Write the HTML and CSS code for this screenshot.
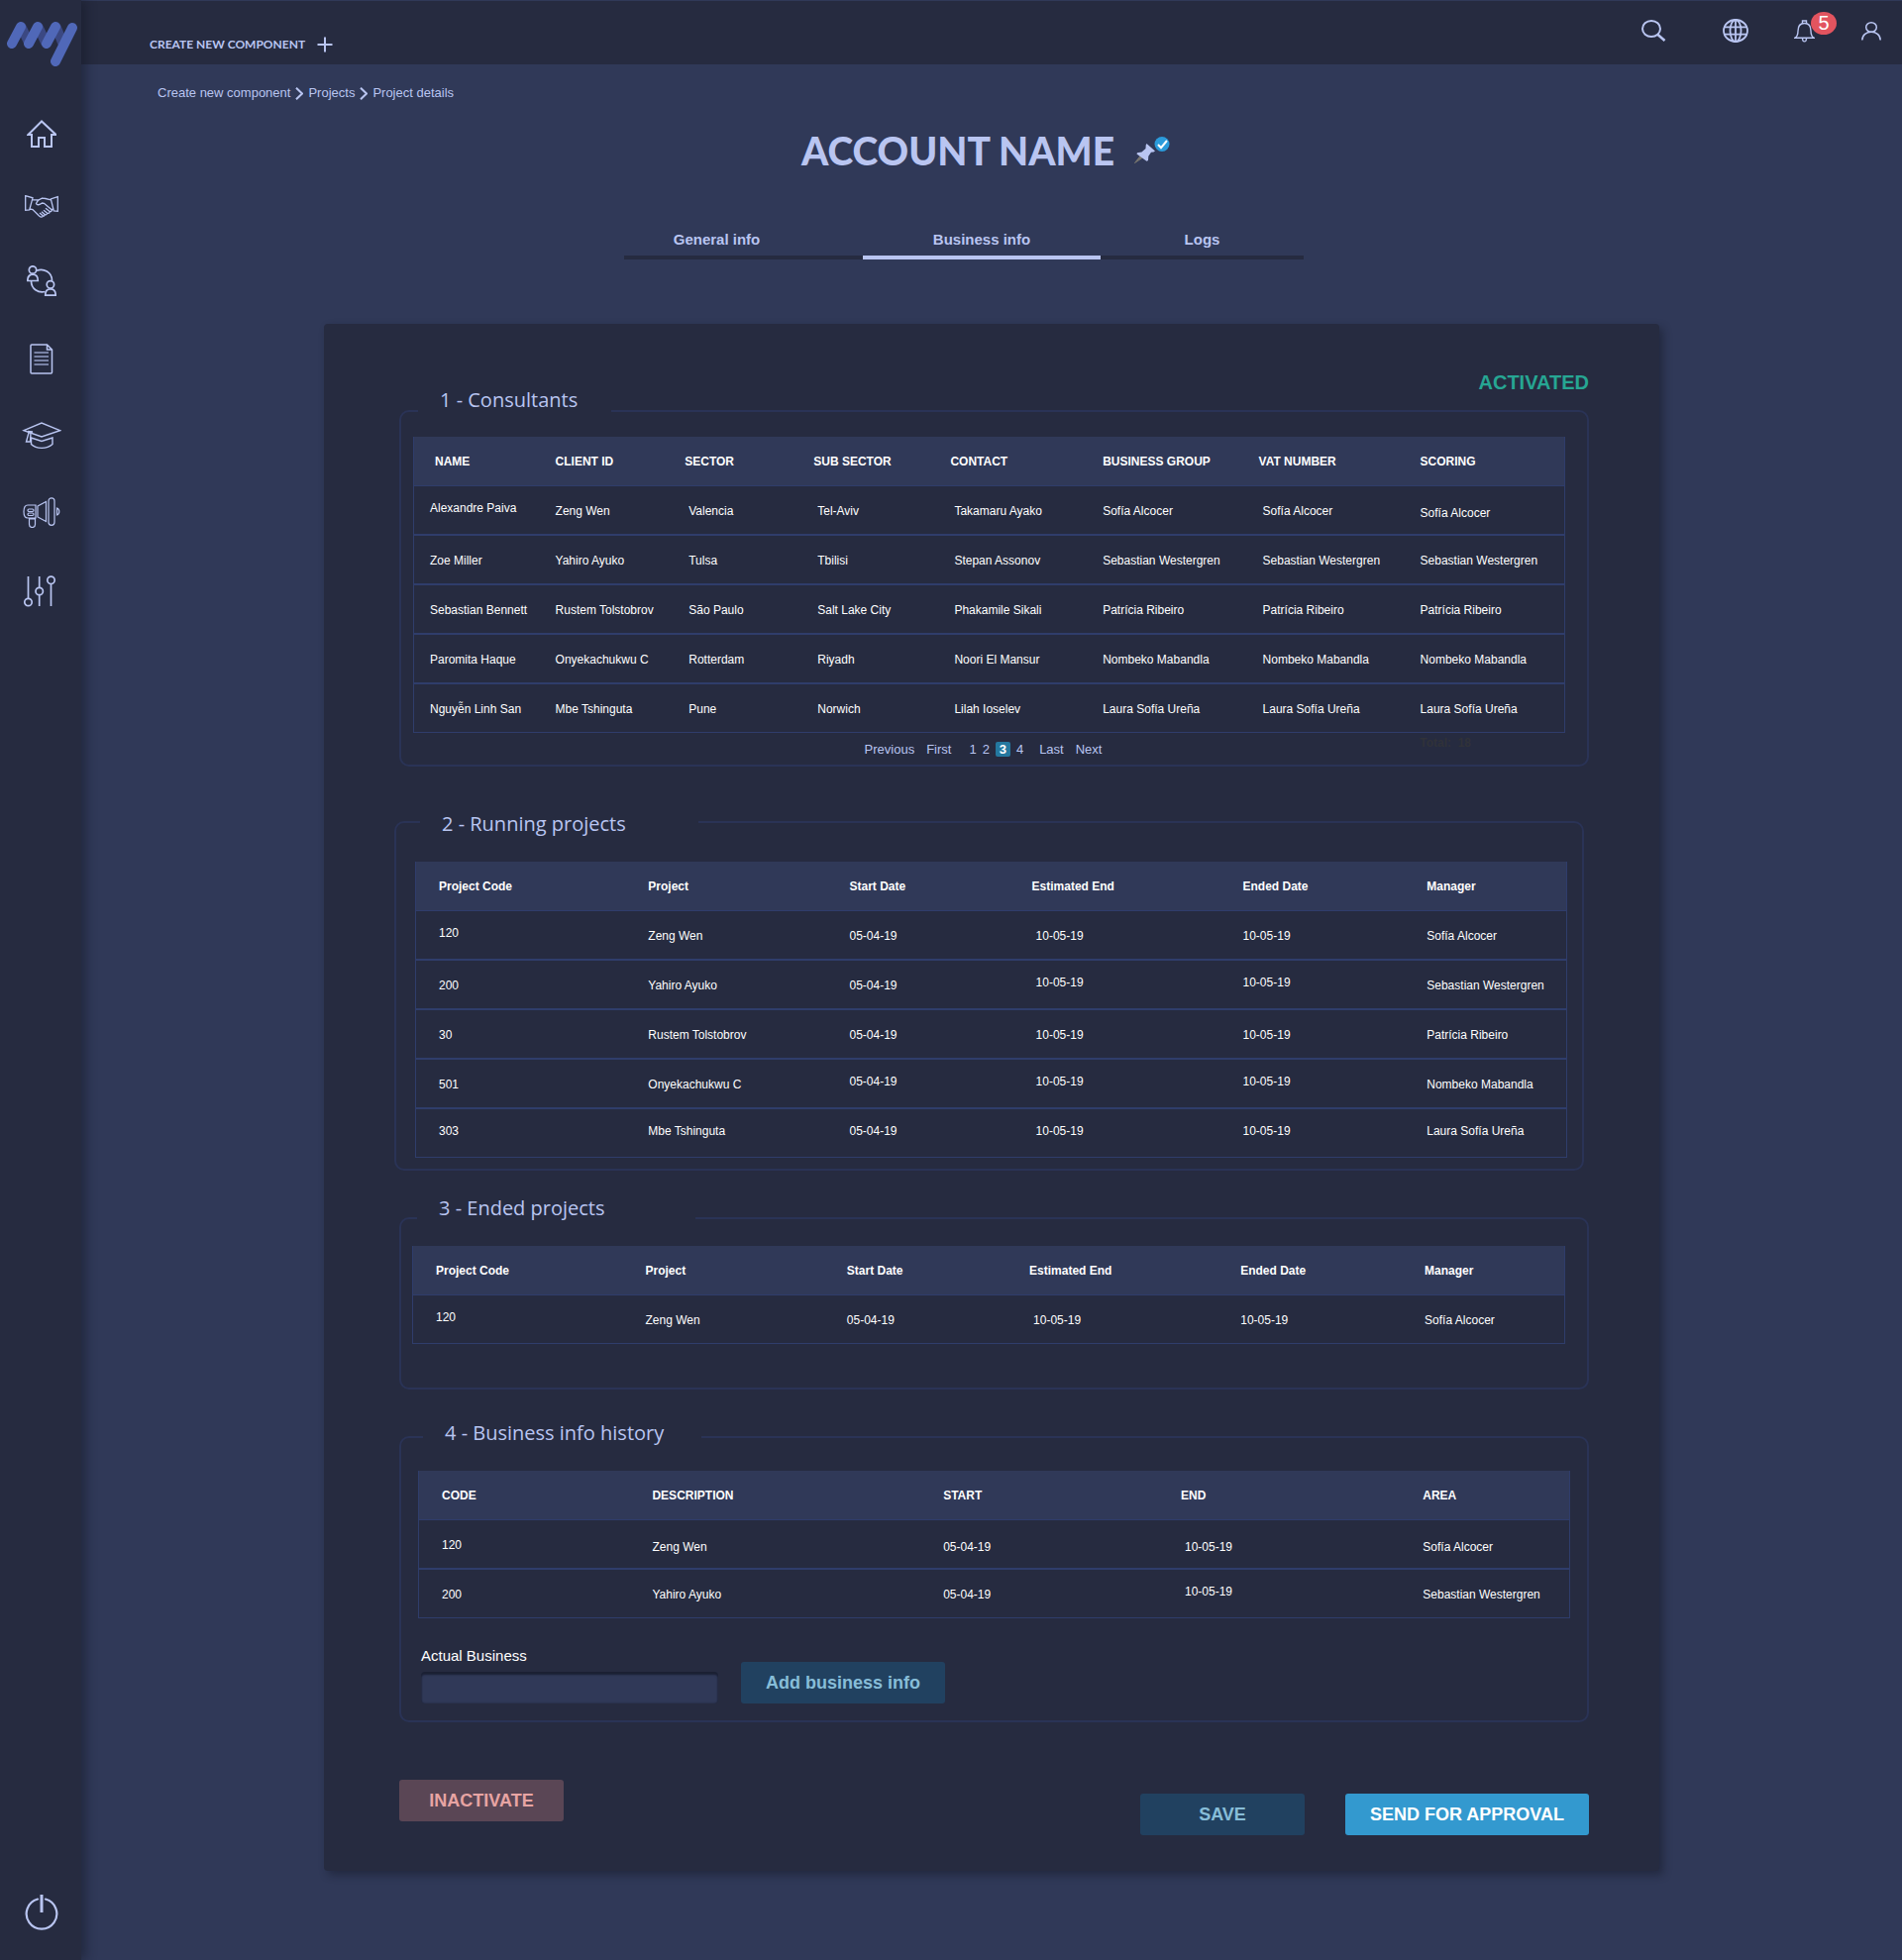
FILE: index.html
```html
<!DOCTYPE html>
<html lang="en">
<head>
<meta charset="utf-8">
<meta name="viewport" content="width=device-width, initial-scale=1">
<title>Account name - Business info</title>
<link rel="stylesheet" href="styles.css">
</head>
<body>
<div class="app">
  <aside class="sidebar">
    <a class="logo" href="#" aria-label="Home page">
      <svg width="72" height="46" viewBox="0 0 72 46" fill="none" stroke-linecap="round" stroke-width="10">
        <path stroke="#3b4882" d="M15 6l7 15M32 6l7 15M50 6l6 15"/>
        <path stroke="#5068b8" d="M14 5L5 22M31 5L22 22M49 5L40 22M66 6L49 40"/>
      </svg>
    </a>
    <nav class="side-nav" aria-label="Main">
      <a href="#" aria-label="Home"><svg width="30" height="28" viewBox="0 0 30 28"><path stroke-width="2" d="M15 1.500L1.500 15H5v12h7V18h6v9h7V15h4.500z"/></svg></a>
      <a href="#" aria-label="Partners"><svg width="34" height="23" viewBox="0 0 34 23"><path stroke-width="1.300" d="M.7.700L8 2.800 4.700 15l-4 .3zM33.300 1.700L26.300 4l3 12 4 .3zM8 4.700l5.500.3 4-1.800 3.500.3 5.300 1.300M18 3.200c-3 .8-5.500 2.800-6.500 5.300.8 2 3.500 1.500 6-.5l2 .3 7.300 6.200c1 1.500-.6 2.500-1.700 1.900L21 13.300M5 14l3 .6 6.500 6.400c1.800 1.500 3.500 1.300 4 0L15 18M26.700 16.500l2-3.500M25 16.600c.2 1.700-1.200 2.200-2.500 1.400L19 15.300M22.500 18.200c0 1.700-1.300 2-2.500 1.200L17 16.800M20 19.700c0 1.200-.7 1.600-1.700 1.500"/></svg></a>
      <a href="#" aria-label="People"><svg width="30" height="31" viewBox="0 0 30 31"><g stroke-width="1.700"><circle cx="6" cy="4.500" r="3.700"/><path d="M.8 15.500c0-4 2-6.300 5.200-6.300s5.300 2.300 5.300 6.300zM18.700 30.200c0-4 2-6.300 5.200-6.300s5.300 2.300 5.300 6.300z"/><circle cx="23.900" cy="19.300" r="3.700"/><path d="M10 5.300c7-3 15.500 1.700 15.500 10M4.500 16c0 7.500 7 12.300 14 10.500"/></g></svg></a>
      <a href="#" aria-label="Documents"><svg width="24" height="31" viewBox="0 0 24 31"><path stroke-width="1.500" d="M1 2Q1 1 2 1h15.500l5 5v23q0 1-1 1H2q-1 0-1-1zM17.500 1v5h5"/><path stroke-width="1.500" opacity=".75" d="M4.500 9H19M4.500 13H19M4.500 17H19M4.500 21H19"/></svg></a>
      <a href="#" aria-label="Training"><svg width="40" height="28" viewBox="0 0 40 28"><g stroke-width="1.400"><path d="M2 8.700L20 1l18.500 7.700L20 15zM9.500 16v6.500c5 5.200 16 5.200 21.500 0V16L20 19.500z"/><path d="M6 9.500l5 .5-4 .8L4.500 20h4L9 11"/></g></svg></a>
      <a href="#" aria-label="Campaigns"><svg width="38" height="31" viewBox="0 0 38 31"><g stroke-width="1.200"><path d="M13 8H5C2.500 8 1 10 1 14.500S2.500 21 5 21h8zM15 9l8.500-4.500v20L15 20zM6.500 22v5.500a2.700 2.700 0 0 0 6 0V22z"/><rect x="26" y=".8" width="6" height="27.500" rx="3"/><rect x="5" y="12" width="6" height="2.500" rx="1.200"/><rect x="5" y="16" width="6" height="2.500" rx="1.200"/><path d="M34.500 11v7c3-1 3-6 0-7z"/></g></svg></a>
      <a href="#" aria-label="Settings"><svg width="36" height="32" viewBox="0 0 36 32"><g stroke-width="1.700"><path d="M4.500 1v22M15.700 1v11.500M15.700 20v11M27.500 9v22"/><circle cx="4.500" cy="27" r="3.700"/><circle cx="15.700" cy="16" r="3.700"/><circle cx="27.500" cy="4.800" r="3.700"/></g></svg></a>
    </nav>
    <button class="power" type="button" aria-label="Log out"><svg width="34" height="36" viewBox="0 0 34 36"><path stroke-width="2.200" stroke-linecap="round" d="M13 4.500a15.300 15.300 0 1 0 8 0"/><path stroke-width="3" d="M17 0v18"/></svg></button>
  </aside>

  <div class="page">
    <header class="topbar">
      <button class="create" type="button">CREATE NEW COMPONENT
        <svg width="16" height="16" viewBox="0 0 16 16"><path stroke-width="2" d="M8 .500v15M.500 8h15"/></svg>
      </button>
      <div class="tools">
        <button type="button" aria-label="Search"><svg width="25" height="22" viewBox="0 0 25 22"><ellipse cx="10" cy="9" rx="9" ry="8" stroke-width="2"/><path stroke-width="2.500" d="M16 14.500l7.500 6.500"/></svg></button>
        <button type="button" aria-label="Language"><svg width="26" height="24" viewBox="0 0 26 24"><g stroke-width="1.800"><ellipse cx="13" cy="12" rx="12" ry="11"/><ellipse cx="13" cy="12" rx="5.500" ry="11"/><path d="M13 1v22M2 8.300h22M2 15.700h22"/></g></svg></button>
        <button class="bell" type="button" aria-label="Notifications"><svg width="21" height="23" viewBox="0 0 21 23"><path stroke-width="1.400" d="M1 18.200c2.500-1.500 3-3 3-7C4 6.500 6.500 3.500 10.500 3.500s6.500 3 6.500 7.700c0 4 .5 5.500 3 7zM8.500 3.500V1h4v2.500M8.500 18.500c0 4.500 4 4.500 4 0"/></svg><span class="badge">5</span></button>
        <button type="button" aria-label="Profile"><svg width="20" height="19" viewBox="0 0 20 19"><g stroke-width="1.500"><ellipse cx="10" cy="5.500" rx="5.300" ry="4.700"/><path d="M.8 18.500c0-11 18.400-11 18.400 0"/></g></svg></button>
      </div>
    </header>

    <nav class="breadcrumb" aria-label="Breadcrumb">
      <a href="#">Create new component</a>
      <svg width="8" height="13" viewBox="0 0 8 13"><path stroke-width="2" d="M1 .700l6 5.800-6 5.800"/></svg>
      <a href="#">Projects</a>
      <svg width="8" height="13" viewBox="0 0 8 13"><path stroke-width="2" d="M1 .700l6 5.800-6 5.800"/></svg>
      <a href="#">Project details</a>
    </nav>

    <main>
      <div class="title">
        <h1>ACCOUNT NAME</h1>
        <svg width="36" height="28" viewBox="0 0 36 28"><path d="M.5 26.500L6 19.500l2 2z" fill="#77756f" stroke="#77756f"/><path fill="#b9c5f1" stroke="none" d="M12.500 7l8.500 7.500-1.500 1-2.500.3-2.700 4-.3 4.200-1.500.8L2.500 17.500l.5-1.300 4.500-.7 4-3.500.2-3.500z"/><circle cx="28" cy="7.500" r="7.500" fill="#2b9bdb" stroke="none"/><path stroke="#fff" stroke-width="2" d="M24 8l3 3.200 6-7.200"/></svg>
      </div>

      <nav class="tabs" aria-label="Account sections">
        <a class="tab tab-first" href="#">General info</a>
        <a class="tab tab-active" href="#" aria-current="page">Business info</a>
        <a class="tab" href="#">Logs</a>
      </nav>

      <div class="panel">
        <p class="status">ACTIVATED</p>

        <section class="group group-consultants">
          <h2>1 - Consultants</h2>
          <table class="tight">
            <colgroup><col class="c-109"><col class="c-116"><col class="c-112"><col class="c-119"><col class="c-129"><col class="c-139"><col class="c-137"><col></colgroup>
            <thead><tr><th class="indent">NAME</th><th>CLIENT ID</th><th class="hang">SECTOR</th><th class="hang">SUB SECTOR</th><th class="hang">CONTACT</th><th>BUSINESS GROUP</th><th class="hang">VAT NUMBER</th><th>SCORING</th></tr></thead>
            <tbody>
              <tr><td class="raised">Alexandre Paiva</td><td>Zeng Wen</td><td>Valencia</td><td>Tel-Aviv</td><td>Takamaru Ayako</td><td>Sofía Alcocer</td><td>Sofía Alcocer</td><td class="lowered">Sofía Alcocer</td></tr>
              <tr><td>Zoe Miller</td><td>Yahiro Ayuko</td><td>Tulsa</td><td>Tbilisi</td><td>Stepan Assonov</td><td>Sebastian Westergren</td><td>Sebastian Westergren</td><td>Sebastian Westergren</td></tr>
              <tr><td>Sebastian Bennett</td><td>Rustem Tolstobrov</td><td>São Paulo</td><td>Salt Lake City</td><td>Phakamile Sikali</td><td>Patrícia Ribeiro</td><td>Patrícia Ribeiro</td><td>Patrícia Ribeiro</td></tr>
              <tr><td>Paromita Haque</td><td>Onyekachukwu C</td><td>Rotterdam</td><td>Riyadh</td><td>Noori El Mansur</td><td>Nombeko Mabandla</td><td>Nombeko Mabandla</td><td>Nombeko Mabandla</td></tr>
              <tr><td>Nguyễn Linh San</td><td>Mbe Tshinguta</td><td>Pune</td><td>Norwich</td><td>Lilah Ioselev</td><td>Laura Sofía Ureña</td><td>Laura Sofía Ureña</td><td>Laura Sofía Ureña</td></tr>
            </tbody>
          </table>
          <div class="table-foot">
            <nav class="pager" aria-label="Pages">
              <a href="#">Previous</a><a href="#">First</a>
              <span class="pages"><a href="#">1</a><a href="#">2</a><a class="current" href="#" aria-current="page">3</a><a href="#">4</a></span>
              <a href="#">Last</a><a href="#">Next</a>
            </nav>
            <span class="total">Total: &nbsp;18</span>
          </div>
        </section>

        <section class="group group-running">
          <h2>2 - Running projects</h2>
          <table>
            <colgroup><col class="c-182"><col class="c-175"><col class="c-162"><col class="c-180"><col class="c-160"><col></colgroup>
            <thead><tr><th>Project Code</th><th>Project</th><th>Start Date</th><th class="hang">Estimated End</th><th>Ended Date</th><th>Manager</th></tr></thead>
            <tbody>
              <tr><td class="raised">120</td><td>Zeng Wen</td><td>05-04-19</td><td>10-05-19</td><td>10-05-19</td><td>Sofía Alcocer</td></tr>
              <tr><td>200</td><td>Yahiro Ayuko</td><td>05-04-19</td><td class="raised">10-05-19</td><td class="raised">10-05-19</td><td>Sebastian Westergren</td></tr>
              <tr><td>30</td><td>Rustem Tolstobrov</td><td>05-04-19</td><td>10-05-19</td><td>10-05-19</td><td>Patrícia Ribeiro</td></tr>
              <tr><td>501</td><td>Onyekachukwu C</td><td class="raised">05-04-19</td><td class="raised">10-05-19</td><td class="raised">10-05-19</td><td>Nombeko Mabandla</td></tr>
              <tr><td class="raised">303</td><td class="raised">Mbe Tshinguta</td><td class="raised">05-04-19</td><td class="raised">10-05-19</td><td class="raised">10-05-19</td><td class="raised">Laura Sofía Ureña</td></tr>
            </tbody>
          </table>
        </section>

        <section class="group group-ended">
          <h2>3 - Ended projects</h2>
          <table>
            <colgroup><col class="c-182"><col class="c-175"><col class="c-162"><col class="c-180"><col class="c-160"><col></colgroup>
            <thead><tr><th>Project Code</th><th>Project</th><th>Start Date</th><th class="hang">Estimated End</th><th>Ended Date</th><th>Manager</th></tr></thead>
            <tbody>
              <tr><td class="raised">120</td><td>Zeng Wen</td><td>05-04-19</td><td>10-05-19</td><td>10-05-19</td><td>Sofía Alcocer</td></tr>
            </tbody>
          </table>
        </section>

        <section class="group group-history">
          <h2>4 - Business info history</h2>
          <table>
            <colgroup><col class="c-183"><col class="c-253"><col class="c-210"><col class="c-207"><col></colgroup>
            <thead><tr><th>CODE</th><th>DESCRIPTION</th><th>START</th><th class="hang">END</th><th>AREA</th></tr></thead>
            <tbody>
              <tr><td>120</td><td class="lowered">Zeng Wen</td><td class="lowered">05-04-19</td><td class="lowered">10-05-19</td><td class="lowered">Sofía Alcocer</td></tr>
              <tr><td>200</td><td>Yahiro Ayuko</td><td>05-04-19</td><td class="raised">10-05-19</td><td>Sebastian Westergren</td></tr>
            </tbody>
          </table>
          <form class="add-form">
            <div class="field">
              <label for="business">Actual Business</label>
              <input id="business" type="text">
            </div>
            <button class="btn btn-muted" type="button">Add business info</button>
          </form>
        </section>

        <div class="actions">
          <button class="btn btn-danger" type="button">INACTIVATE</button>
          <div class="actions-end">
            <button class="btn btn-muted" type="button">SAVE</button>
            <button class="btn btn-primary" type="button">SEND FOR APPROVAL</button>
          </div>
        </div>
      </div>
    </main>
  </div>
</div>
</body>
</html>
```
FILE: styles.css
```css
:root {
  --page: #303958;
  --dark: #262b40;
  --line: #2f3d6b;
  --group-line: #2a3356;
  --text: #b9c5f1;
}

* { box-sizing: border-box; }

body {
  margin: 0;
  background: var(--page);
  color: var(--text);
  font-family: "Liberation Sans", Arial, sans-serif;
  font-size: 13px;
}

h1, h2, p { margin: 0; }
a { color: inherit; text-decoration: none; }

button {
  padding: 0;
  border: 0;
  background: none;
  color: inherit;
  font: inherit;
  cursor: pointer;
}

svg {
  display: block;
  flex: none;
  fill: none;
  stroke: var(--text);
}

.app {
  display: grid;
  grid-template-columns: 82px minmax(0, 1fr);
  min-height: 100vh;
}

/* Sidebar */
.sidebar {
  position: relative;
  z-index: 1;
  display: flex;
  flex-direction: column;
  align-items: center;
  padding: 22px 0 30px 2px;
  background: var(--dark);
  box-shadow: 5px 0 10px rgba(18, 22, 36, .45);
}

.logo { padding-left: 2px; }
.logo svg { stroke: none; }

.side-nav {
  display: flex;
  flex-direction: column;
  align-items: center;
  gap: 48px;
  margin-top: 53px;
}

.power { margin-top: auto; }

/* Top bar */
.topbar {
  display: flex;
  justify-content: space-between;
  height: 64px;
  margin-top: 1px;
  padding: 0 21px 0 69px;
  background: var(--dark);
}

.create {
  display: flex;
  align-items: center;
  gap: 12px;
  padding-top: 23px;
  font: 700 12px/20px Lato, sans-serif;
}

.tools {
  display: grid;
  grid-template-columns: 82px 72px 68px 20px;
  align-items: center;
  height: 60px;
}

.bell { position: relative; width: 21px; }

.badge {
  position: absolute;
  top: -8px;
  left: 17px;
  width: 26px;
  height: 23px;
  border-radius: 50%;
  background: #e2545f;
  color: #fff;
  font-size: 20px;
  line-height: 23px;
}

.breadcrumb {
  display: flex;
  align-items: center;
  gap: 5px;
  padding: 19px 77px 0;
  line-height: 20px;
}

/* Title and tabs */
.title {
  display: flex;
  justify-content: center;
  gap: 20px;
  margin-top: 27px;
  padding-right: 12px;
}

.title h1 { font: 900 39px/42px Lato, sans-serif; }
.title svg { margin-top: 7px; }

.tabs {
  display: grid;
  grid-template-columns: 241fr 240fr 205fr;
  max-width: 742px;
  margin: 60px auto 0;
  padding-right: 56px;
}

.tab {
  height: 29px;
  border-bottom: 4px solid var(--dark);
  font-size: 15px;
  font-weight: 700;
  line-height: 18px;
  text-align: center;
}

.tab-first { padding-right: 54px; }
.tab-active { border-color: var(--text); }

/* Panel */
.panel {
  max-width: 1348px;
  margin: 65px auto 80px;
  padding: 47px 71px 36px 76px;
  border-radius: 4px;
  background: var(--dark);
  box-shadow: 4px 4px 9px rgba(18, 22, 36, .45);
}

.status {
  margin-bottom: 16px;
  color: #26a693;
  font-size: 20px;
  font-weight: 700;
  line-height: 24px;
  text-align: right;
}

.group {
  border: 2px solid var(--group-line);
  border-radius: 10px;
}

.group h2 {
  width: 281px;
  height: 28px;
  margin-bottom: 24px;
  padding-left: 22px;
  background: var(--dark);
  font: 400 20px/28px "Open Sans", sans-serif;
}

.group-consultants { padding: 0 22px 0 12px; }
.group-consultants h2 { width: 195px; margin: -26px 0 23px 5px; }

.group-running {
  margin: 55px 5px 0 -5px;
  padding: 0 15px 11px 19px;
}
.group-running h2 { margin-top: -13px; margin-left: 5px; }

.group-ended { margin-top: 47px; padding: 0 22px 44px 11px; }
.group-ended h2 { margin-top: -25px; margin-left: 5px; }

.group-history { margin-top: 47px; padding: 0 17px 17px; }
.group-history h2 { margin-top: -19px; margin-left: 5px; }

/* Tables */
table {
  width: 100%;
  border: solid var(--line);
  border-width: 0 1px;
  border-collapse: separate;
  border-spacing: 0;
  table-layout: fixed;
  color: #fff;
  font-size: 12px;
  line-height: 16px;
}

th, td {
  height: 50px;
  padding: 0 0 0 23px;
  text-align: left;
}

th { background: var(--page); border-bottom: 1px solid var(--line); }
td { padding-top: 2px; border-bottom: 2px solid var(--line); }
tbody tr:last-child td { height: 49px; border-bottom-width: 1px; }

th.hang { padding-left: 19px; }
.tight th, .tight td { padding-left: 16px; }
.tight th.hang { padding-left: 12px; }
.tight th.indent { padding-left: 21px; }

td.raised { padding-bottom: 6px; }
td.lowered { padding-top: 6px; }

.c-109 { width: 10.9%; }
.c-112 { width: 11.2%; }
.c-116 { width: 11.6%; }
.c-119 { width: 11.9%; }
.c-129 { width: 12.9%; }
.c-137 { width: 13.7%; }
.c-139 { width: 13.9%; }
.c-160 { width: 16%; }
.c-162 { width: 16.2%; }
.c-175 { width: 17.5%; }
.c-180 { width: 18%; }
.c-182 { width: 18.2%; }
.c-183 { width: 18.3%; }
.c-207 { width: 20.7%; }
.c-210 { width: 21%; }
.c-253 { width: 25.3%; }

/* Pager */
.table-foot {
  display: grid;
  grid-template-columns: 1fr auto 1fr;
  height: 32px;
  padding-right: 12px;
}

.pager {
  grid-column: 2;
  display: flex;
  align-items: center;
  gap: 12px;
}

.pages {
  display: flex;
  gap: 6px;
  margin: 0 4px 0 6px;
}

.pages .current {
  width: 15px;
  border-radius: 2px;
  background: #24789f;
  color: #fff;
  font-weight: 700;
  text-align: center;
}

.total {
  justify-self: end;
  margin-right: 83px;
  color: #303239;
  font-size: 12px;
  font-weight: 700;
  line-height: 20px;
}

/* Form and buttons */
.add-form {
  display: flex;
  align-items: flex-end;
  gap: 23px;
  padding: 28px 3px 0;
}

.field {
  display: flex;
  flex-direction: column;
  gap: 6px;
  width: 300px;
  color: #fff;
  font-size: 15px;
  line-height: 20px;
}

.field input {
  width: 100%;
  height: 32px;
  padding: 0 8px;
  border: 0;
  border-radius: 4px;
  background: var(--page);
  box-shadow: inset 0 3px 2px #1b2033, inset 0 0 2px #1b2033;
  color: #fff;
  font: inherit;
}

.btn {
  min-width: 166px;
  height: 42px;
  padding: 0 25px;
  border-radius: 3px;
  font-size: 18px;
  font-weight: 700;
}

.btn-muted { background: #214160; color: #87bdd8; }
.btn-danger { background: #5a4655; color: #e8a4a3; }
.btn-primary { background: #3399cf; color: #fff; }

.actions {
  display: flex;
  justify-content: space-between;
  margin-top: 58px;
}

.actions-end {
  display: flex;
  gap: 41px;
  margin-top: 14px;
}
```
